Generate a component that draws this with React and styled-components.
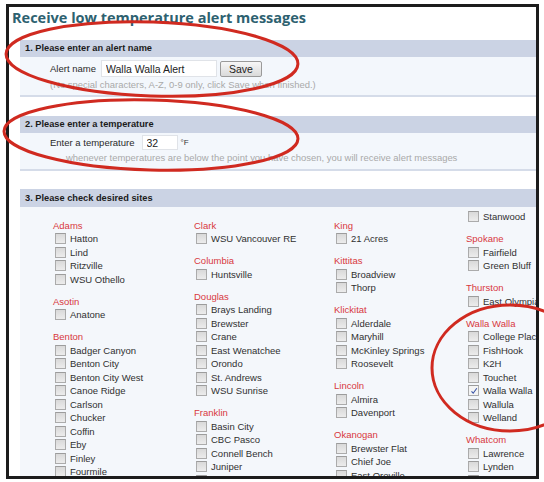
import React from 'react';
import styled, { createGlobalStyle } from 'styled-components';

const GlobalStyle = createGlobalStyle`
  html, body {
    margin: 0;
    padding: 0;
    background: #fff;
  }
  body {
    font-family: "Liberation Sans", Arial, sans-serif;
  }
`

const Page = styled.div`
  position: relative;
  width: 544px;
  height: 482px;
  overflow: hidden;
  background: #fff;
`

const Frame = styled.div`
  box-sizing: border-box;
  margin: 4px 0 0 6px;
  width: 533px;
  height: 475px;
  border: 3px solid #1c1c1c;
  overflow: hidden;
  display: flex;
  flex-direction: column;
  background: #fff;
`

const Title = styled.h1`
  margin: 0;
  box-sizing: border-box;
  height: 33px;
  padding: 1px 0 0 3px;
  font-family: "Open Sans", "DejaVu Sans", sans-serif;
  font-weight: 700;
  font-size: 14.5px;
  line-height: 20px;
  color: #2d6170;
  white-space: nowrap;
`

const Sections = styled.div`
  flex: 1;
  display: flex;
  flex-direction: column;
  margin-left: 11px;
  min-height: 0;
`

const Section = styled.section`
  margin-bottom: ${p => p.$gap || 0}px;
  display: flex;
  flex-direction: column;
  flex: ${p => (p.$grow ? 1 : 'none')};
  min-height: 0;
`

const SectionHead = styled.div`
  height: ${p => p.$h || 17}px;
  line-height: ${p => p.$h || 17}px;
  padding-left: 5px;
  background: #cbd3e4;
  font-weight: bold;
  font-size: 9.25px;
  color: #1b1b1b;
  white-space: nowrap;
`

const SectionBody = styled.div`
  background: #f3f7fc;
  border-bottom: 2px solid #d5dce9;
  padding: ${p => p.$pad};
`

const FieldRow = styled.div`
  display: flex;
  align-items: center;
  height: ${p => p.$h}px;
  padding-left: 30px;
`

const Label = styled.span`
  font-size: 9.5px;
  color: #2a2a2a;
  margin-right: ${p => p.$gap}px;
  white-space: nowrap;
`

const TextBox = styled.input`
  box-sizing: border-box;
  width: ${p => p.$w}px;
  height: ${p => p.$h}px;
  border: 1px solid #e0e3e8;
  background: #fff;
  padding: 0 4px;
  margin: 0;
  font-family: "Liberation Sans", Arial, sans-serif;
  font-size: 10.5px;
  color: #222;
  outline: none;
`

const SaveButton = styled.button`
  box-sizing: border-box;
  margin-left: 3px;
  width: 42px;
  height: 16px;
  padding: 0;
  border: 1px solid #9a9a9a;
  border-radius: 2px;
  background: linear-gradient(#f7f7f7, #dadada);
  font-family: "Liberation Sans", Arial, sans-serif;
  font-size: 10.5px;
  color: #222;
`

const Unit = styled.span`
  margin-left: 3px;
  font-size: 8px;
  color: #333;
`

const Hint = styled.div`
  margin-top: 2px;
  padding-left: ${p => p.$indent}px;
  height: 12px;
  line-height: 12px;
  font-size: 9.45px;
  color: #a9a9a9;
  white-space: nowrap;
`

const SiteBody = styled.div`
  flex: 1;
  background: #f4f7fb;
  padding: 3px 0 0 33px;
  display: grid;
  grid-template-columns: 141px 140px 132px 1fr;
  align-items: start;
  overflow: hidden;
`

const Column = styled.div`
  display: flex;
  flex-direction: column;
  min-width: 0;
`

const Group = styled.div`
  margin-top: ${p => (p.$cont ? 0 : 8.5)}px;
`

const County = styled.div`
  height: 13.5px;
  line-height: 13.5px;
  font-size: 9.5px;
  color: #d8383e;
  white-space: nowrap;
`

const Site = styled.label`
  display: flex;
  align-items: center;
  height: 13.5px;
  font-size: 9.5px;
  color: #303030;
  white-space: nowrap;
`

const Box = styled.span`
  box-sizing: border-box;
  flex: none;
  width: 11px;
  height: 11px;
  margin: 0 4px 0 2px;
  border: 1px solid #ababab;
  border-top-color: #9c9c9c;
  background: ${p => (p.$on ? '#f4f4f4' : 'linear-gradient(#d9d9d9, #ececec)')};
  display: flex;
  align-items: center;
  justify-content: center;
`

const Marks = styled.svg`
  position: absolute;
  left: 0;
  top: 0;
  pointer-events: none;
`

const columns = [
  [
    { name: 'Adams', sites: ['Hatton', 'Lind', 'Ritzville', 'WSU Othello'] },
    { name: 'Asotin', sites: ['Anatone'] },
    {
      name: 'Benton',
      sites: ['Badger Canyon', 'Benton City', 'Benton City West', 'Canoe Ridge', 'Carlson',
        'Chucker', 'Coffin', 'Eby', 'Finley', 'Fourmile'],
    },
  ],
  [
    { name: 'Clark', sites: ['WSU Vancouver RE'] },
    { name: 'Columbia', sites: ['Huntsville'] },
    {
      name: 'Douglas',
      sites: ['Brays Landing', 'Brewster', 'Crane', 'East Wenatchee', 'Orondo', 'St. Andrews', 'WSU Sunrise'],
    },
    { name: 'Franklin', sites: ['Basin City', 'CBC Pasco', 'Connell Bench', 'Juniper', 'Mesa'] },
  ],
  [
    { name: 'King', sites: ['21 Acres'] },
    { name: 'Kittitas', sites: ['Broadview', 'Thorp'] },
    { name: 'Klickitat', sites: ['Alderdale', 'Maryhill', 'McKinley Springs', 'Roosevelt'] },
    { name: 'Lincoln', sites: ['Almira', 'Davenport'] },
    { name: 'Okanogan', sites: ['Brewster Flat', 'Chief Joe', 'East Oroville'] },
  ],
  [
    { name: null, sites: ['Stanwood'] },
    { name: 'Spokane', sites: ['Fairfield', 'Green Bluff'] },
    { name: 'Thurston', sites: ['East Olympia'] },
    {
      name: 'Walla Walla',
      sites: ['College Place', 'FishHook', 'K2H', 'Touchet', 'Walla Walla', 'Wallula', 'Welland'],
    },
    { name: 'Whatcom', sites: ['Lawrence', 'Lynden', 'Nooksack'] },
  ],
]

const checked = ['Walla Walla']

function Tick() {
  return (
    <svg width="8" height="8" viewBox="0 0 8 8">
      <path d="M1.5 4.3 L3.2 6.2 L6.8 1.2" fill="none" stroke="#3a55a8" strokeWidth="1.1" />
    </svg>
  )
}

export default function App() {
  return (
    <Page>
      <GlobalStyle />
      <Frame>
        <Title>Receive low temperature alert messages</Title>
        <Sections>
          <Section $gap={19}>
            <SectionHead>1. Please enter an alert name</SectionHead>
            <SectionBody $pad="3px 0 4px 0">
              <FieldRow $h={17}>
                <Label $gap={5}>Alert name</Label>
                <TextBox $w={116} $h={17} defaultValue="Walla Walla Alert" />
                <SaveButton>Save</SaveButton>
              </FieldRow>
              <Hint $indent={30}>(No special characters, A-Z, 0-9 only, click Save when finished.)</Hint>
            </SectionBody>
          </Section>
          <Section $gap={18}>
            <SectionHead>2. Please enter a temperature</SectionHead>
            <SectionBody $pad="2px 0 5px 0">
              <FieldRow $h={15}>
                <Label $gap={7}>Enter a temperature</Label>
                <TextBox $w={36} $h={15} defaultValue="32" />
                <Unit>°F</Unit>
              </FieldRow>
              <Hint $indent={46}>
                whenever temperatures are below the point you have chosen, you will receive alert messages
              </Hint>
            </SectionBody>
          </Section>
          <Section $grow>
            <SectionHead $h={18}>3. Please check desired sites</SectionHead>
            <SiteBody>
              {columns.map((groups, i) => (
                <Column key={i}>
                  {groups.map((g, j) => (
                    <Group key={j} $cont={!g.name}>
                      {g.name && <County>{g.name}</County>}
                      {g.sites.map(s => {
                        const on = g.name === 'Walla Walla' && checked.includes(s)
                        return (
                          <Site key={s}>
                            <Box $on={on}>{on && <Tick />}</Box>
                            {s}
                          </Site>
                        )
                      })}
                    </Group>
                  ))}
                </Column>
              ))}
            </SiteBody>
          </Section>
        </Sections>
      </Frame>
      <Marks width="544" height="482" viewBox="0 0 544 482">
        <g fill="none" stroke="#d02a20" strokeWidth="3">
          <ellipse cx="152" cy="59" rx="146" ry="37" transform="rotate(2 152 59)" />
          <ellipse cx="151" cy="135" rx="147" ry="35" transform="rotate(1.5 151 135)" />
          <ellipse cx="510" cy="368" rx="78" ry="63" />
        </g>
      </Marks>
    </Page>
  )
}
